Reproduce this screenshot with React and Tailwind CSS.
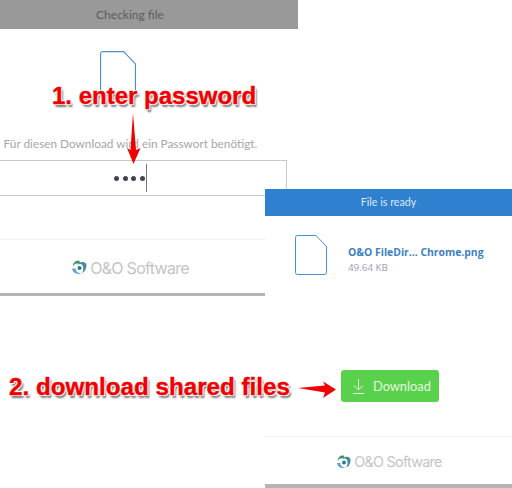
import React from 'react';

const FileIcon = ({ className }) => (
  <svg className={className} viewBox="0 0 32 40" fill="none">
    <path d="M2.5 .5H21L31.5 11.5V37.5a2 2 0 0 1-2 2H2.5a2 2 0 0 1-2-2V2.5a2 2 0 0 1 2-2Z" stroke="#4a90d6" strokeWidth="1" />
  </svg>
);

const Logo = ({ small }) => (
  <div className="flex items-center gap-[2px]">
    <svg className={small ? 'w-[16px] h-[16px]' : 'w-[17px] h-[17px]'} viewBox="0 0 18 18" fill="none">
      <path d="M1 10c1 5 6 7 10 5-3 0-6-1-6-5Z" fill="#5ba3d9" />
      <path d="M13 9c0-3-3-5-6-3 1-3 7-4 9-1 1 2 0 5-1 7-1 2-3 3-4 3 2-1 2-4 2-6Z" fill="#4a8a96" />
      <path d="M9 2C6 1 2 3 2 8c1-2 3-4 5-3 2 0 3-2 2-3Z" fill="#3d8f6f" />
      <circle cx="9" cy="9.5" r="2.2" fill="#2d7d8c" />
    </svg>
    <span className={`font-['Inter',sans-serif] font-normal tracking-[-0.7px] text-[#c4c4c4] ${small ? 'text-[14.3px]' : 'text-[16px]'}`}>O&amp;O Software</span>
  </div>
);

const label = "absolute whitespace-nowrap font-['Liberation_Sans',sans-serif] font-bold text-[#f00000] leading-[28px] [-webkit-text-stroke:0.4px_#f00000] [text-shadow:-1px_-1px_0_#fff,1px_-1px_0_#fff,-1px_1px_0_#fff,1px_1px_0_#fff,2px_3px_2px_#777]";

export default function App() {
  return (
    <div className="relative w-[512px] h-[488px] overflow-hidden bg-white font-['Lato',sans-serif]">
      {/* left window */}
      <div className="absolute left-0 top-0 w-[298px] flex flex-col">
        <div className="h-[29px] bg-[#999999] flex items-center justify-center pr-[38px] text-[12px] text-[#5c5c5c]">Checking file</div>
        <div className="h-[131px] w-[261px] flex flex-col items-center">
          <FileIcon className="w-[36px] h-[45px] mt-[22px] self-start ml-[100px]" />
          <p className="mt-[40px] text-[11.8px] leading-[16px] text-[#a6a6a6] whitespace-nowrap">Für diesen Download wird ein Passwort benötigt.</p>
        </div>
        <div className="w-[287px] h-[36px] border border-l-0 border-[#c8c8c8] flex items-center justify-end pr-[139px]">
          <div className="flex gap-[3.7px]">
            <span className="w-[5px] h-[5px] rounded-full bg-[#3f4650]" />
            <span className="w-[5px] h-[5px] rounded-full bg-[#3f4650]" />
            <span className="w-[5px] h-[5px] rounded-full bg-[#3f4650]" />
            <span className="w-[5px] h-[5px] rounded-full bg-[#3f4650]" />
          </div>
          <span className="w-[1px] h-[28px] ml-[1px] bg-[#777777]" />
        </div>
        <div className="h-[43px]" />
        <div className="h-[54px] border-t border-[#f3f3f3] flex items-center justify-center pt-[2px] pr-[5px] w-[265px]">
          <Logo />
        </div>
        <div className="h-[3px] w-[265px] bg-[#b5b5b5]" />
      </div>

      {/* right window */}
      <div className="absolute left-[265px] top-[189px] w-[247px] h-[299px] bg-white flex flex-col">
        <div className="h-[27px] bg-[#2f80ce] flex items-center justify-center text-[10.7px] text-[#dce9f6]">File is ready</div>
        <div className="flex items-center mt-[19px] ml-[30px]">
          <FileIcon className="w-[32px] h-[40px]" />
          <div className="ml-[21px] flex flex-col mt-[10px]">
            <span className="font-['Open_Sans',sans-serif] text-[10.4px] leading-[15px] font-bold text-[#3b7fc4] whitespace-nowrap">O&amp;O FileDir... Chrome.png</span>
            <span className="font-['Open_Sans',sans-serif] text-[9.8px] leading-[15px] text-[#9b9fb0]">49.64 KB</span>
          </div>
        </div>
        <div className="mt-[95px] ml-[76px] w-[98px] h-[32px] rounded-[3px] bg-[#5ad14c] flex items-center pl-[11px] gap-[8px] text-[12.8px] text-[#e4f8e0]">
          <svg className="w-[13px] h-[15px]" viewBox="0 0 13 15" fill="none" stroke="#e8f9e4" strokeWidth="1">
            <path d="M6.5 0V11M2 6.5L6.5 11L11 6.5M1 14.5H12" />
          </svg>
          <span className="mt-[2px]">Download</span>
        </div>
        <div className="mt-[34px] h-[48px] border-t border-[#f1f1f1] flex items-center justify-center pt-[2px] pl-[1px]">
          <Logo small />
        </div>
        <div className="h-[4px] bg-[#b5b5b5]" />
      </div>

      {/* annotations */}
      <div className={`${label} text-[24px] left-[52px] top-[82px]`}>1. enter password</div>
      <svg className="absolute left-[124px] top-[112px] w-[20px] h-[54px]" viewBox="0 0 20 54" fill="none">
        <path d="M9 1L12 38L16.5 36L9.5 52L3 36L6.5 38Z" fill="#f00000" />
      </svg>
      <div className={`${label} text-[24.2px] left-[9px] top-[373px]`}>2. download shared files</div>
      <svg className="absolute left-[298px] top-[380px] w-[40px] h-[20px]" viewBox="0 0 40 20" fill="none">
        <path d="M0 8L27 5.5L25 1.5L38 9.5L25 18L27 12.5Z" fill="#f00000" />
      </svg>
    </div>
  );
}
